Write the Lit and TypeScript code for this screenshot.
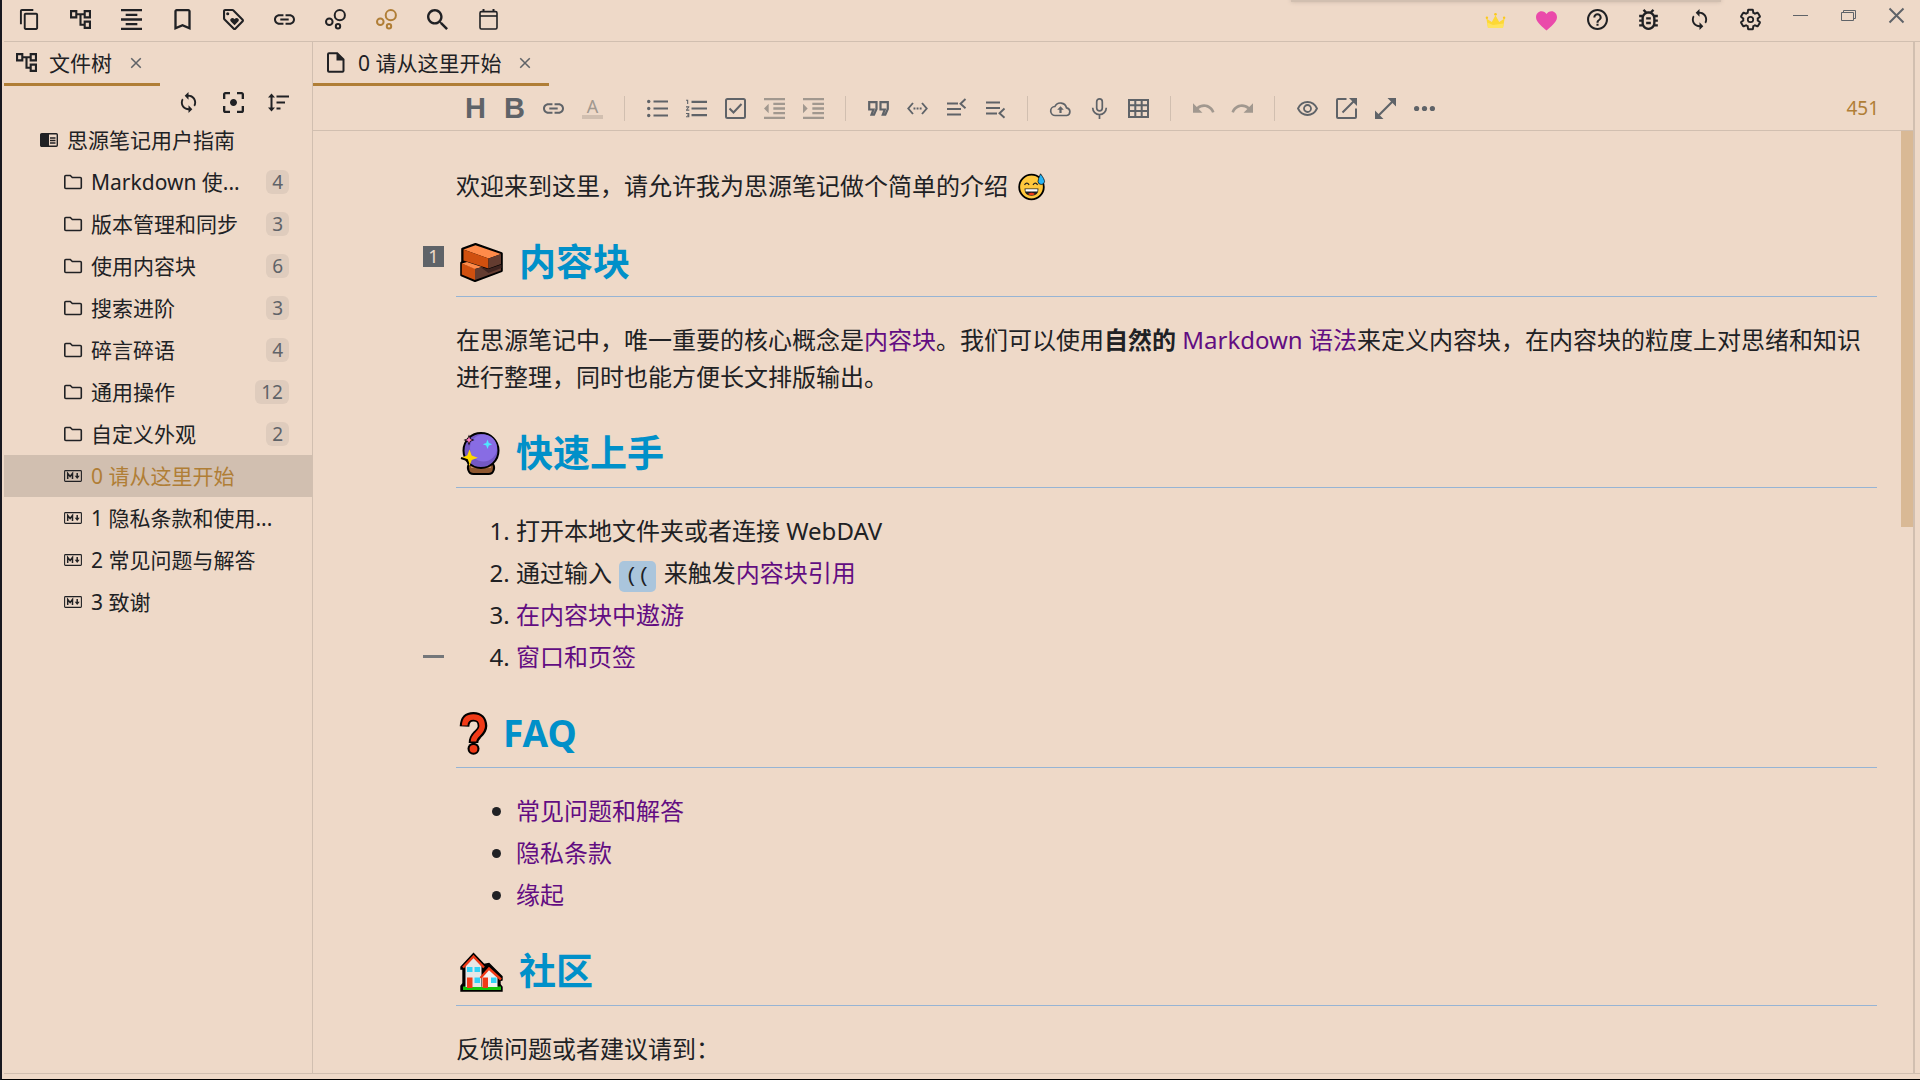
import { LitElement, html, svg, css, type SVGTemplateResult } from "lit";
import { customElement, property, state } from "lit/decorators.js";
import { classMap } from "lit/directives/class-map.js";

interface Icon {
  box: string;
  art: SVGTemplateResult;
}

const solid = (box: string, d: string): Icon => ({ box, art: svg`<path d=${d} fill="currentColor"/>` });
const line = (d: string, width = 2): Icon => ({
  box: "0 0 21 21",
  art: svg`<path d=${d} fill="none" stroke="currentColor" stroke-width=${width}/>`,
});

const bubbles: Icon = {
  box: "0 0 21 21",
  art: svg`<g fill="none" stroke="currentColor" stroke-width="2">
    <circle cx="4.3" cy="12.7" r="3.3"/><circle cx="14.8" cy="6.2" r="5.1"/><circle cx="13" cy="17.2" r="2.2"/></g>`,
};

const ICONS: Record<string, Icon> = {
  copy: solid("1 1 22 22", "M16 1H4c-1.1 0-2 .9-2 2v14h2V3h12V1zm3 4H8c-1.1 0-2 .9-2 2v14c0 1.1.9 2 2 2h11c1.1 0 2-.9 2-2V7c0-1.1-.9-2-2-2zm0 16H8V7h11v14z"),
  tree: solid("2 2 20 20", "M22 11V3h-7v3H9V3H2v8h7V8h2v10h4v3h7v-8h-7v3h-2V8h2v3h7zM7 9H4V5h3v4zm10 6h3v4h-3v-4zm0-10h3v4h-3V5z"),
  outline: solid("3 3 18 18", "M7 15v2h10v-2H7zm-4 6h18v-2H3v2zm0-8h18v-2H3v2zm4-6v2h10V7H7zM3 3v2h18V3H3z"),
  bookmark: solid("3 3 18 18", "M17 3H7c-1.1 0-2 .9-2 2v16l7-3 7 3V5c0-1.1-.9-2-2-2zm0 15l-5-2.18L7 18V5h10v13z"),
  tag: solid("2 2 20 20", "M21.41 11.58l-9-9C12.05 2.22 11.55 2 11 2H4c-1.1 0-2 .9-2 2v7c0 .55.22 1.05.59 1.42l9 9c.36.36.86.58 1.41.58s1.05-.22 1.41-.59l7-7c.37-.36.59-.86.59-1.41s-.23-1.06-.59-1.42zM13 20.01L4 11V4h7v-.01l9 9-7 7.02zM6.5 5a1.5 1.5 0 1 0 0 3 1.5 1.5 0 1 0 0-3zM8.9 12.55c0 .57.23 1.07.6 1.45l3.5 3.5 3.5-3.5c.37-.37.6-.89.6-1.45 0-1.13-.92-2.05-2.05-2.05-.57 0-1.08.23-1.45.6l-.6.6-.6-.59c-.37-.38-.89-.61-1.45-.61-1.13 0-2.05.92-2.05 2.05z"),
  link: solid("2 2 20 20", "M3.9 12c0-1.71 1.39-3.1 3.1-3.1h4V7H7c-2.76 0-5 2.24-5 5s2.24 5 5 5h4v-1.9H7c-1.71 0-3.1-1.39-3.1-3.1zM8 13h8v-2H8v2zm9-6h-4v1.9h4c1.71 0 3.1 1.39 3.1 3.1s-1.39 3.1-3.1 3.1h-4V17h4c2.76 0 5-2.24 5-5s-2.24-5-5-5z"),
  graph: bubbles,
  search: solid("3 3 17.5 17.5", "M15.5 14h-.79l-.28-.27C15.41 12.59 16 11.11 16 9.5 16 5.91 13.09 3 9.5 3S3 5.91 3 9.5 5.91 16 9.5 16c1.61 0 3.09-.59 4.23-1.57l.27.28v.79l5 4.99L20.49 19l-4.99-5zm-6 0C7.01 14 5 11.99 5 9.5S7.01 5 9.5 5 14 7.01 14 9.5 11.99 14 9.5 14z"),
  calendar: {
    box: "0 0 21 21",
    art: svg`<rect x="2" y="2.6" width="17" height="17.4" rx="1.4" fill="none" stroke="currentColor" stroke-width="1.6"/>
      <path d="M2 7h17" stroke="currentColor" stroke-width="1.6"/><path d="M5.5 0v3M15.5 0v3" stroke="currentColor" stroke-width="2"/>`,
  },
  crown: {
    box: "0 0 21 21",
    art: svg`<path d="M3 19 1.4 9.5 6.8 13 10.5 6.2 14.2 13 19.6 9.5 18 19z" fill="#fdd835"/>
      <path d="M3 19 2.2 13.5 8 16l10.6-1.6L18 19z" fill="#ffe35c"/>
      <circle cx="1.9" cy="8.8" r="1.2" fill="#fbc91b"/><circle cx="10.5" cy="5.2" r="1.3" fill="#fbc91b"/><circle cx="19.1" cy="8.8" r="1.2" fill="#fbc91b"/>`,
  },
  heart: {
    box: "0 0 21 21",
    art: svg`<path d="M10.5 21.6C7 18 0 13.500 0 8.200 0 4.600 2.600 2.200 5.500 2.200c2.200 0 4 1.200 5 2.800 1-1.600 2.800-2.800 5-2.800 2.900 0 5.500 2.400 5.500 6 0 5.300-7 9.800-10.500 13.400z" fill="#ea4aaa"/>`,
  },
  help: solid("2 2 20 20", "M11 18h2v-2h-2v2zm1-16C6.48 2 2 6.48 2 12s4.48 10 10 10 10-4.48 10-10S17.52 2 12 2zm0 18c-4.41 0-8-3.59-8-8s3.59-8 8-8 8 3.59 8 8-3.59 8-8 8zm0-14c-2.21 0-4 1.79-4 4h2c0-1.1.9-2 2-2s2 .9 2 2c0 2-3 1.75-3 5h2c0-2.25 3-2.5 3-5 0-2.21-1.79-4-4-4z"),
  bug: solid("3 3 18 18", "M20 8h-2.81c-.45-.78-1.07-1.45-1.82-1.96L17 4.41 15.59 3l-2.17 2.17C12.96 5.06 12.49 5 12 5s-.96.06-1.41.17L8.41 3 7 4.41l1.62 1.63C7.88 6.55 7.26 7.22 6.81 8H4v2h2.09c-.05.33-.09.66-.09 1v1H4v2h2v1c0 .34.04.67.09 1H4v2h2.81c1.04 1.79 2.97 3 5.19 3s4.15-1.21 5.19-3H20v-2h-2.09c.05-.33.09-.66.09-1v-1h2v-2h-2v-1c0-.34-.04-.67-.09-1H20V8zm-4 7c0 2.21-1.79 4-4 4s-4-1.79-4-4v-4c0-2.21 1.79-4 4-4s4 1.79 4 4v4zm-6-1h4v2h-4zm0-4h4v2h-4z"),
  sync: solid("1 1 22 22", "M12 4V1L8 5l4 4V6c3.31 0 6 2.69 6 6 0 1.01-.25 1.97-.7 2.800l1.460 1.460C19.540 15.030 20 13.570 20 12c0-4.420-3.580-8-8-8zm0 14c-3.310 0-6-2.690-6-6 0-1.010.250-1.970.7-2.800L5.240 7.740C4.460 8.970 4 10.430 4 12c0 4.420 3.580 8 8 8v3l4-4-4-4v3z"),
  gear: {
    box: "1.200 1.200 21.600 21.600",
    art: svg`<path d="M19.430 12.980c.04-.32.07-.64.07-.98s-.03-.66-.07-.98l2.110-1.650c.19-.15.24-.42.12-.64l-2-3.460c-.12-.22-.39-.3-.61-.22l-2.490 1c-.52-.4-1.080-.73-1.690-.98l-.38-2.650C14.460 2.180 14.250 2 14 2h-4c-.25 0-.46.18-.49.42l-.38 2.650c-.61.25-1.170.59-1.690.98l-2.490-1c-.23-.09-.49 0-.61.22l-2 3.460c-.13.22-.07.49.12.64l2.110 1.650c-.04.32-.07.65-.07.98s.03.66.07.98l-2.110 1.650c-.19.15-.24.42-.12.64l2 3.460c.12.22.39.3.61.22l2.490-1c.52.4 1.080.73 1.690.98l.38 2.650c.03.24.24.42.49.42h4c.25 0 .46-.18.49-.42l.38-2.650c.61-.25 1.170-.59 1.690-.98l2.490 1c.23.09.49 0 .61-.22l2-3.460c.12-.22.07-.49-.12-.64z" fill="none" stroke="currentColor" stroke-width="2"/>
      <circle cx="12" cy="12" r="2.800" fill="none" stroke="currentColor" stroke-width="1.800"/>`,
  },
  focus: solid("3 3 18 18", "M5 15H3v4c0 1.100.9 2 2 2h4v-2H5v-4zM5 5h4V3H5c-1.100 0-2 .9-2 2v4h2V5zm14-2h-4v2h4v4h2V5c0-1.100-.9-2-2-2zm0 16h-4v2h4c1.100 0 2-.9 2-2v-4h-2v4zM12 9c-1.660 0-3 1.340-3 3s1.340 3 3 3 3-1.340 3-3-1.340-3-3-3z"),
  sort: {
    box: "0 0 21 21",
    art: svg`<path d="M8.500 4.500H21M8.500 10.500h8.500M8.500 16.500h4M3.500 4v13" stroke="currentColor" stroke-width="2"/>
      <path d="M0 5.500 3.500 1.500 7 5.500zM0 15.500 3.500 19.500 7 15.500z" fill="currentColor"/>`,
  },
  close: line("M5.500 5.500l10 10M15.500 5.500l-10 10", 1.6),
  file: {
    box: "0 0 21 21",
    art: svg`<path d="M4 1.200h8.200l6.300 6.300v11.300q0 1-1 1H4q-1 0-1-1V2.200q0-1 1-1z" fill="none" stroke="currentColor" stroke-width="2"/>
      <path d="M11.500 1v7.500H19z" fill="currentColor"/>`,
  },
  book: {
    box: "0 0 18 18",
    art: svg`<rect x=".7" y="2.700" width="16.600" height="12.600" rx="1" fill="none" stroke="currentColor" stroke-width="1.400"/>
      <path d="M1 3h8v12H1z" fill="currentColor"/><path d="M10 7h5.500M10 9.500h5.500M10 12h5.500" stroke="currentColor" stroke-width="1.300"/>`,
  },
  folder: {
    box: "0 0 18 18",
    art: svg`<path d="M.8 14.500V3.500q0-1 1-1h4.500l2 2h8q1 0 1 1v9q0 1-1 1H1.800q-1 0-1-1z" fill="none" stroke="currentColor" stroke-width="1.600"/>`,
  },
  markdown: {
    box: "0 0 18 18",
    art: svg`<rect x=".6" y="3.600" width="16.800" height="10.800" rx=".8" fill="none" stroke="currentColor" stroke-width="1.100"/>
      <path d="M3.700 12V6.500l2.400 3 2.400-3V12" fill="none" stroke="currentColor" stroke-width="1.500"/>
      <path d="M13.200 6v4" stroke="currentColor" stroke-width="1.500"/><path d="M10.700 8.800h5l-2.500 3.200z" fill="currentColor"/>`,
  },
  bullets: {
    box: "0 0 21 21",
    art: svg`<path d="M6.500 3.500H21M6.500 10.500H21M6.500 17.500H21" stroke="currentColor" stroke-width="1.900"/>
      <g fill="currentColor"><circle cx="1.700" cy="3.500" r="1.700"/><circle cx="1.700" cy="10.500" r="1.700"/><circle cx="1.700" cy="17.500" r="1.700"/></g>`,
  },
  numbers: solid("2 2.500 19 19", "M2 17h2v.5H3v1h1v.5H2v1h3v-4H2v1zm1-9h1V4H2v1h1v3zm-1 3h1.800L2 13.100v.9h3v-1H3.200L5 10.900V10H2v1zm5-6v2h14V5H7zm0 14h14v-2H7v2zm0-6h14v-2H7v2z"),
  check: {
    box: "0 0 21 21",
    art: svg`<rect x="1" y="1" width="19" height="19" rx="1.500" fill="none" stroke="currentColor" stroke-width="2"/>
      <path d="M4.500 10.500l4 4 8-8.500" fill="none" stroke="currentColor" stroke-width="2"/>`,
  },
  outdent: solid("3 3 18 18", "M11 17h10v-2H11v2zm-8-5l4 4V8l-4 4zm0 9h18v-2H3v2zM3 3v2h18V3H3zm8 6h10V7H11v2zm0 4h10v-2H11v2z"),
  indent: solid("3 3 18 18", "M3 21h18v-2H3v2zM3 8v8l4-4-4-4zm8 9h10v-2H11v2zM3 3v2h18V3H3zm8 6h10V7H11v2zm0 4h10v-2H11v2z"),
  quote: line("M1.200 4.200h7.300v6.800L6 16.700H3.500l2-5.200H1.200zM12.500 4.200h7.300v6.800l-2.500 5.700h-2.500l2-5.200h-4.300z", 2.2),
  code: {
    box: "0 0 21 21",
    art: svg`<path d="M6 5 1.300 10.500 6 16M15 5l4.700 5.500L15 16" fill="none" stroke="currentColor" stroke-width="1.900"/>
      <path d="M6.500 9.600h1.900v1.900H6.500zM9.600 9.600h1.900v1.900H9.600zM12.700 9.600h1.900v1.900h-1.900z" fill="currentColor"/>`,
  },
  before: line("M1 5.500h11M1 11h14M1 16.500h14M19.500 1l-5 4.700 5 4.500", 1.9),
  after: line("M1 4.500h14M1 10h14M1 15.500h11M19.500 10.500l-5 4.700 5 4.500", 1.9),
  upload: {
    box: "0 0 21 21",
    art: svg`<path d="M5.500 17.500a4.500 4.500 0 0 1-.6-9 6.200 6.200 0 0 1 11.600 1.300 3.900 3.900 0 0 1 .2 7.700z" fill="none" stroke="currentColor" stroke-width="1.700"/>
      <path d="M10.500 8.200l3.300 3.600h-2.200V15H9.400v-3.200H7.200z" fill="currentColor"/>`,
  },
  mic: {
    box: "0 0 21 21",
    art: svg`<rect x="7.700" y=".9" width="5.600" height="12" rx="2.800" fill="none" stroke="currentColor" stroke-width="1.700"/>
      <path d="M3.700 9.800a6.800 6.800 0 0 0 13.600 0M10.500 16.600V21" fill="none" stroke="currentColor" stroke-width="1.700"/>`,
  },
  table: line("M1 2h19v17H1zM7.300 2v17M13.700 2v17M1 7.200h19M1 13h19", 2),
  undo: solid("2 2 20 20", "M12.500 8c-2.650 0-5.050.99-6.900 2.600L2 7v9h9l-3.620-3.620c1.390-1.160 3.160-1.880 5.120-1.880 3.540 0 6.550 2.310 7.600 5.500l2.370-.78C21.080 11.030 17.150 8 12.500 8z"),
  redo: solid("2 2 20 20", "M18.400 10.600C16.550 8.990 14.150 8 11.500 8c-4.650 0-8.580 3.030-9.960 7.220L3.900 16c1.050-3.190 4.050-5.500 7.600-5.500 1.950 0 3.730.72 5.120 1.880L13 16h9V7l-3.600 3.600z"),
  eye: {
    box: "0 0 21 21",
    art: svg`<path d="M1 10.500C3 6.300 6.500 4 10.500 4s7.500 2.300 9.500 6.500c-2 4.200-5.500 6.500-9.500 6.500S3 14.700 1 10.500z" fill="none" stroke="currentColor" stroke-width="1.800"/>
      <circle cx="10.500" cy="10.500" r="3.500" fill="none" stroke="currentColor" stroke-width="1.800"/>`,
  },
  external: {
    box: "0 0 21 21",
    art: svg`<path d="M10.500 1H2q-1 0-1 1v17q0 1 1 1h17q1 0 1-1v-8.500M6.500 14.500 19 2" fill="none" stroke="currentColor" stroke-width="2"/>
      <path d="M13 0h8v8z" fill="currentColor"/>`,
  },
  expand: {
    box: "0 0 21 21",
    art: svg`<path d="M3 18 18 3" stroke="currentColor" stroke-width="2.200"/><path d="M12.500 0H21v8.500zM0 12.500V21h8.500z" fill="currentColor"/>`,
  },
  more: {
    box: "0 0 21 21",
    art: svg`<g fill="currentColor"><circle cx="2.600" cy="10.500" r="2.600"/><circle cx="10.500" cy="10.500" r="2.600"/><circle cx="18.400" cy="10.500" r="2.600"/></g>`,
  },
  minimize: line("M3 10.500h15", 1),
  restore: line("M3.500 7.500h12v8h-12zM5.500 7.500v-2h12v8h-2", 1),
  exit: line("M3.500 3.500l14 14M17.500 3.500l-14 14", 2),
};

const EMOJI = {
  sweat: svg`<circle cx="13.500" cy="14" r="12.300" fill="#ffc83d" stroke="#000" stroke-width="1.800"/>
    <path d="M6.500 11.800q2.400-3.400 4.600 0M15 11.800q2.400-3.400 4.600 0" fill="none" stroke="#222" stroke-width="1.300"/>
    <path d="M6.500 15.500h14q0 7.300-7 7.300t-7-7.300z" fill="#1f1f1f"/><path d="M7.500 16.200h12v2.300h-12z" fill="#fff"/>
    <path d="M10 21q3.500-2.400 7 0-3.500 2.400-7 0z" fill="#f03a17"/>
    <path d="M22.500.8q4.200 5.500 4 8-.5 2.700-3.300 2.700-3-.2-3.200-3 0-2.500 2.500-7.700z" fill="#27b4f5" stroke="#000" stroke-width=".7"/>`,
  brick: svg`<path d="M2.500 6 15.500 1.300 41.500 10.500v17.300L15 37.700 1.500 32V20l1-1z" fill="#000" stroke="#000" stroke-width="2.600" stroke-linejoin="round"/>
    <path d="M3.500 6.500 15.500 2.300 41 11 28.500 15.500z" fill="#ff8b4a"/><path d="M3.500 6.500 28.500 15.500V25.500L3.500 17.500z" fill="#d0500f"/>
    <path d="M28.500 15.500 41 11v10L28.500 25.500z" fill="#643c30"/>
    <path d="M1.800 20.500 15 25.500V37L1.800 31.500z" fill="#d0500f"/><path d="M1.800 20.500 7 19l15 5-7 2z" fill="#ff8b4a"/>
    <path d="M15 26 22 24l7 3.500 12-5v5L15 37z" fill="#643c30"/><path d="M21 24.500l7.500 1.500 13-4.500v3.500l-13 5z" fill="#3f2420"/>`,
  crystal: svg`<path d="M9 32h24q2 3 .5 6.500-1 3.500-5 3.500h-15q-4 0-5-3.500Q7 35 9 32z" fill="#8e562e" stroke="#000" stroke-width="2"/>
    <path d="M11 33h20v3H11z" fill="#c78d5c"/>
    <circle cx="21" cy="18.500" r="17.500" fill="#7358c4" stroke="#000" stroke-width="2"/>
    <circle cx="23.500" cy="16" r="13.500" fill="#886ce4"/>
    <path d="M9 2.500l1.500 4 4 1.500-4 1.500L9 13.500 7.500 9.500l-4-1.500 4-1.500z" fill="#000"/><path d="M9 4.500l1 2.500 2.500 1L10 9l-1 2.500L8 9 5.500 8 8 7z" fill="#ff7dc0"/>
    <path d="M9.500 17.500l2.300 6 6 2.300-6 2.200-2.300 6-2.300-6-6.200-2.200 6.200-2.300z" fill="#ffd800"/><path d="M1 26l6 2 1.500 4" fill="none" stroke="#000" stroke-width="2"/>
    <path d="M27.500 7.500l1.300 3.400 3.400 1.300-3.400 1.300-1.300 3.500-1.300-3.500-3.400-1.300 3.400-1.300z" fill="#50e6ff"/>`,
  question: svg`<path d="M4.500 14.500Q5 4.700 13.500 4.700t9 9.300q0 4-5 8.500-4 4-4 8.500" fill="none" stroke="#000" stroke-width="9.600"/>
    <circle cx="13.500" cy="36.800" r="6" fill="#000"/>
    <path d="M4.700 13.500Q5 5 13.500 5t8.700 9q0 3.500-4.500 8-4.200 4-4.200 7.500" fill="none" stroke="#f03a17" stroke-width="5.600"/>
    <circle cx="13.500" cy="36.800" r="3.900" fill="#f03a17"/>`,
  houses: svg`<path d="M1 15 13.500 1.500 24 12.500l5-1 13 13v3.500l-2 .5v4l2 2.500v4H1v-5l2-2.500V17H1z" fill="#000" stroke="#000" stroke-width="1.400"/>
    <path d="M3 34.500h38v3.500H3z" fill="#16c60c"/>
    <path d="M5.500 14 13.500 5.500 21.500 14v21h-16z" fill="#e6e6e6"/><path d="M22 24l7-7 8.500 8v10H22z" fill="#f2f2f2"/>
    <path d="M3 15.500 13.500 4.500 24 15.500" fill="none" stroke="#f03a17" stroke-width="2.400"/>
    <path d="M20.500 26 29 16.500 41 27.500" fill="none" stroke="#f03a17" stroke-width="2.400"/>
    <path d="M7 15h5.500v5H7zM14.500 15H20v5h-5.500zM14.500 25.500H20V31h-5.500zM31 25.500h5.500V31H31z" fill="#31d2f7"/>
    <path d="M7 25.500h5.500v10.500H7zM22.500 25.500H28v10.500h-5.500z" fill="#f03a17"/>`,
};

@customElement("app-icon")
export class AppIcon extends LitElement {
  @property() name = "";

  static styles = css`
    :host { display: inline-flex; width: 21px; height: 21px; flex: none; }
    svg { width: 100%; height: 100%; overflow: visible; }
  `;

  render() {
    const icon = ICONS[this.name];
    return icon ? html`<svg viewBox=${icon.box} aria-hidden="true">${icon.art}</svg>` : html``;
  }
}

type Tool = [name: string, label: string, tone?: string];

const DOCKS: Tool[] = [
  ["copy", "工作空间"], ["tree", "文件树"], ["outline", "大纲"], ["bookmark", "书签"], ["tag", "标签"],
  ["link", "反向链接"], ["graph", "关系图"], ["graph", "全局关系图", "accent"], ["search", "搜索"], ["calendar", "日记"],
];
const ACTIONS: Tool[] = [
  ["crown", "订阅"], ["heart", "赞助"], ["help", "帮助"], ["bug", "反馈"], ["sync", "同步"], ["gear", "设置"],
];
const WINDOW: Tool[] = [["minimize", "最小化"], ["restore", "还原"], ["exit", "关闭"]];
const PANEL: Tool[] = [["sync", "刷新"], ["focus", "定位"], ["sort", "排序"]];
const TOOLBAR: Tool[][] = [
  [["H", "标题"], ["B", "粗体"], ["link", "链接"], ["A", "颜色", "dim"]],
  [["bullets", "无序列表"], ["numbers", "有序列表"], ["check", "任务列表"], ["outdent", "减少缩进", "dim"], ["indent", "增加缩进", "dim"]],
  [["quote", "引用"], ["code", "行内代码"], ["before", "在前插入"], ["after", "在后插入"]],
  [["upload", "上传"], ["mic", "录音"], ["table", "表格"]],
  [["undo", "撤销", "dim"], ["redo", "重做", "dim"]],
  [["eye", "预览"], ["external", "导出"], ["expand", "全屏"], ["more", "更多"]],
];

const TREE: { icon: string; name: string; count?: number }[] = [
  { icon: "folder", name: "Markdown 使...", count: 4 },
  { icon: "folder", name: "版本管理和同步", count: 3 },
  { icon: "folder", name: "使用内容块", count: 6 },
  { icon: "folder", name: "搜索进阶", count: 3 },
  { icon: "folder", name: "碎言碎语", count: 4 },
  { icon: "folder", name: "通用操作", count: 12 },
  { icon: "folder", name: "自定义外观", count: 2 },
  { icon: "markdown", name: "0 请从这里开始" },
  { icon: "markdown", name: "1 隐私条款和使用..." },
  { icon: "markdown", name: "2 常见问题与解答" },
  { icon: "markdown", name: "3 致谢" },
];

@customElement("app-root")
export class AppRoot extends LitElement {
  @state() private selected = 7;

  static styles = css`
    :host {
      --bg: #eed9c8;
      --line: #d1bfb0;
      --accent: #b07e36;
      --text: #202124;
      --muted: #5f6368;
      display: block;
      font-family: "Noto Sans", "Noto Sans CJK SC", sans-serif;
      font-size: 21px;
      line-height: 30px;
      color: var(--text);
    }
    * { box-sizing: border-box; }
    button {
      display: flex;
      align-items: center;
      justify-content: center;
      padding: 0;
      border: 0;
      background: none;
      color: inherit;
      font: inherit;
    }
    a { color: #620d82; text-decoration: none; }

    .app {
      position: relative;
      display: flex;
      flex-direction: column;
      height: 100vh;
      padding-left: 2px;
      overflow: hidden;
      background: var(--bg);
      border-left: 2px solid #17171f;
      border-bottom: 1px solid #000;
    }
    .window-shadow {
      position: absolute;
      top: -4px;
      right: 199px;
      width: 430px;
      height: 6px;
      background: #d1bfb0;
      box-shadow: 0 0 4px #c9b6a7;
    }

    .titlebar {
      display: flex;
      flex: none;
      height: 42px;
      border-bottom: 1px solid var(--line);
    }
    .titlebar button { width: 51px; height: 39px; }
    .titlebar .window { width: 48px; height: 31px; color: var(--muted); }
    .spacer { flex: 1; }
    .accent { color: var(--accent); }

    .body {
      display: flex;
      flex: 1;
      min-height: 0;
      margin-bottom: 5px;
      border-bottom: 1px solid var(--line);
    }
    .sidebar {
      display: flex;
      flex-direction: column;
      flex: none;
      width: 309px;
      border-right: 1px solid var(--line);
    }
    .tab {
      display: flex;
      align-items: center;
      align-self: flex-start;
      flex: none;
      gap: 12px;
      height: 44px;
      padding: 0 12px;
      border-bottom: 3px solid var(--accent);
      white-space: nowrap;
    }
    .tab button { width: 24px; height: 24px; color: var(--muted); }
    .tab button app-icon { width: 20px; height: 20px; }

    .panel-tools {
      display: flex;
      justify-content: flex-end;
      flex: none;
      height: 33px;
      padding-right: 11px;
    }
    .panel-tools button { width: 45px; }

    .tree { margin: 0; padding: 0; list-style: none; }
    .node {
      display: flex;
      justify-content: flex-start;
      gap: 9px;
      width: 100%;
      height: 42px;
      padding: 0 23px 0 60px;
    }
    .node.root { padding-left: 36px; }
    .node app-icon { width: 18px; height: 18px; }
    .node .name { flex: 1; text-align: left; white-space: nowrap; }
    .node.selected { background: var(--line); color: var(--accent); }
    .node.selected app-icon { color: var(--text); }
    .count {
      padding: 0 6px;
      border-radius: 6px;
      background: #dfccbd;
      color: var(--muted);
      font-size: 19px;
      line-height: 24px;
    }

    .editor {
      display: flex;
      flex-direction: column;
      flex: 1;
      min-width: 0;
      margin-right: 5px;
      border-right: 2px solid var(--line);
    }
    .toolbar {
      display: flex;
      align-items: center;
      flex: none;
      height: 45px;
      padding: 0 34px 0 143px;
      border-bottom: 1px solid var(--line);
      color: var(--muted);
    }
    .toolbar button { width: 39px; height: 39px; }
    .toolbar .dim { color: #a1988f; }
    .divider { width: 1px; height: 25px; margin: 0 13px 0 12px; background: var(--line); }
    .letter { font: bold 29px/39px "Liberation Sans", sans-serif; }
    .color-letter {
      width: 21px;
      border-bottom: 4px solid var(--line);
      font-size: 18px;
      line-height: 18px;
    }
    .chars { font-size: 19px; }

    .scroller { display: flex; flex: 1; min-height: 0; }
    .doc {
      flex: 1;
      min-width: 0;
      padding: 36px 24px 0 143px;
      overflow: hidden;
      font-size: 24px;
      line-height: 37px;
    }
    .doc p { margin: 0; }
    .doc h2 {
      position: relative;
      display: flex;
      align-items: center;
      gap: 16px;
      margin: 35px 0 24px;
      padding: 0 0 11px 4px;
      border-bottom: 1px solid #96b4d4;
      color: #0090c9;
      font-size: 37px;
      line-height: 46px;
    }
    .doc h2 svg { flex: none; overflow: visible; }
    .doc ol, .doc ul {
      display: flex;
      flex-direction: column;
      gap: 5px;
      margin: 0;
      padding-left: 60px;
    }
    .doc li { position: relative; }
    .smile { width: 27px; height: 27px; margin-left: 4px; vertical-align: -5px; overflow: visible; }
    code {
      margin: 0 1px;
      padding: 4px 6px;
      border-radius: 5px;
      background: #aac5dc;
      font: 21px/24px "Liberation Mono", monospace;
    }
    .mark {
      position: absolute;
      top: 7px;
      left: -33px;
      width: 21px;
      height: 21px;
      background: var(--muted);
      color: var(--bg);
      font-size: 18px;
      font-weight: 400;
      line-height: 21px;
      text-align: center;
    }
    .dash {
      position: absolute;
      top: 17px;
      left: -93px;
      width: 21px;
      height: 3px;
      background: #74777a;
    }
    .track { flex: none; width: 12px; }
    .thumb { height: 42%; background: #d9b995; }
  `;

  private tool([name, label, tone = ""]: Tool, extra = "") {
    const face =
      name === "A"
        ? html`<span class="color-letter">A</span>`
        : name === "H" || name === "B"
          ? html`<span class="letter">${name}</span>`
          : html`<app-icon name=${name}></app-icon>`;
    return html`<button class="${tone} ${extra}" aria-label=${label}>${face}</button>`;
  }

  private tab(icon: string, title: string) {
    return html`<div class="tab">
      <app-icon name=${icon}></app-icon><span>${title}</span>
      <button aria-label="关闭页签"><app-icon name="close"></app-icon></button>
    </div>`;
  }

  private heading(art: SVGTemplateResult, width: number, height: number, title: string, mark = "") {
    return html`<h2>
      ${mark ? html`<span class="mark">${mark}</span>` : ""}
      <svg width=${width} height=${height} viewBox="0 0 ${width} ${height}" aria-hidden="true">${art}</svg>
      <span>${title}</span>
    </h2>`;
  }

  render() {
    return html`<div class="app" lang="zh-CN">
      <header class="titlebar">
        ${DOCKS.map((t) => this.tool(t))}
        <span class="spacer"></span>
        ${ACTIONS.map((t) => this.tool(t))}
        ${WINDOW.map((t) => this.tool(t, "window"))}
      </header>
      <div class="body">
        <aside class="sidebar">
          ${this.tab("tree", "文件树")}
          <div class="panel-tools">${PANEL.map((t) => this.tool(t))}</div>
          <ul class="tree">
            <li><button class="node root"><app-icon name="book"></app-icon><span class="name">思源笔记用户指南</span></button></li>
            ${TREE.map(
              (n, i) => html`<li>
                <button class=${classMap({ node: true, selected: i === this.selected })} @click=${() => (this.selected = i)}>
                  <app-icon name=${n.icon}></app-icon><span class="name">${n.name}</span>
                  ${n.count ? html`<span class="count">${n.count}</span>` : ""}
                </button>
              </li>`,
            )}
          </ul>
        </aside>
        <main class="editor">
          ${this.tab("file", "0 请从这里开始")}
          <div class="toolbar">
            ${TOOLBAR.map((group, i) => html`${i ? html`<span class="divider"></span>` : ""}${group.map((t) => this.tool(t))}`)}
            <span class="spacer"></span>
            <span class="chars accent">451</span>
          </div>
          <div class="scroller">
            <article class="doc">
              <p>欢迎来到这里，请允许我为思源笔记做个简单的介绍 <svg class="smile" viewBox="0 0 27 27" role="img" aria-label="笑脸">${EMOJI.sweat}</svg></p>
              ${this.heading(EMOJI.brick, 43, 39, "内容块", "1")}
              <p>在思源笔记中，唯一重要的核心概念是<a href="#block">内容块</a>。我们可以使用<strong>自然的</strong> <a href="#markdown">Markdown 语法</a>来定义内容块，在内容块的粒度上对思绪和知识进行整理，同时也能方便长文排版输出。</p>
              ${this.heading(EMOJI.crystal, 40, 43, "快速上手")}
              <ol>
                <li>打开本地文件夹或者连接 WebDAV</li>
                <li>通过输入 <code>((</code> 来触发<a href="#ref">内容块引用</a></li>
                <li><a href="#travel">在内容块中遨游</a></li>
                <li><span class="dash"></span><a href="#window">窗口和页签</a></li>
              </ol>
              ${this.heading(EMOJI.question, 27, 43, "FAQ")}
              <ul>
                <li><a href="#faq">常见问题和解答</a></li>
                <li><a href="#privacy">隐私条款</a></li>
                <li><a href="#origin">缘起</a></li>
              </ul>
              ${this.heading(EMOJI.houses, 43, 39, "社区")}
              <p>反馈问题或者建议请到：</p>
            </article>
            <div class="track"><div class="thumb"></div></div>
          </div>
        </main>
      </div>
      <div class="window-shadow"></div>
    </div>`;
  }
}
